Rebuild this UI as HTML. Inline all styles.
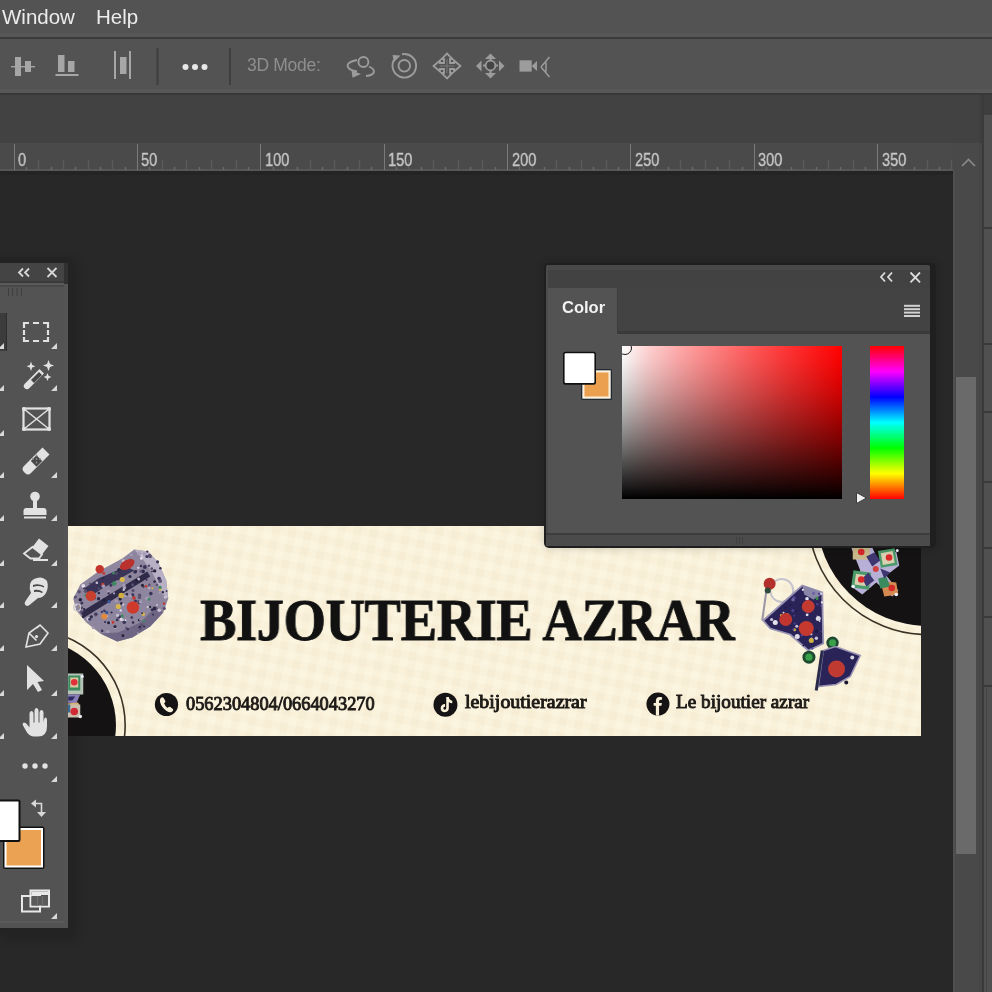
<!DOCTYPE html>
<html><head><meta charset="utf-8">
<style>
*{margin:0;padding:0;box-sizing:border-box}
html,body{width:992px;height:992px;overflow:hidden;background:#282828;font-family:"Liberation Sans",sans-serif}
.a{position:absolute}
.t{will-change:transform}
</style></head>
<body>
<!-- menu bar -->
<div class="a" style="left:0;top:0;width:992px;height:37px;background:#535353"></div>
<div class="a" style="left:0;top:33px;width:992px;height:4px;background:#575757"></div>
<div class="a" style="left:0;top:37px;width:992px;height:2px;background:#3a3a3a"></div>
<div class="a t" style="left:2px;top:3px;font-size:20.5px;color:#ececec;line-height:28px">Window</div>
<div class="a t" style="left:96px;top:3px;font-size:20.5px;color:#ececec;line-height:28px">Help</div>
<!-- options bar -->
<div class="a" style="left:0;top:39px;width:992px;height:50px;background:#535353"></div>
<div class="a" style="left:0;top:89px;width:992px;height:4px;background:#585858"></div>
<div class="a" style="left:0;top:93px;width:992px;height:2px;background:#383838"></div>
<!-- tab area -->
<div class="a" style="left:0;top:95px;width:979px;height:48px;background:#424242"></div>
<!-- ruler -->
<div class="a" style="left:0;top:143px;width:953px;height:28px;background:#4a4a4a"></div>
<!-- scroll track -->
<div class="a" style="left:0;top:171px;width:953px;height:4px;background:#242424"></div>
<div class="a" style="left:953px;top:143px;width:29px;height:849px;background:#494949"></div><div class="a" style="left:953px;top:171px;width:2px;height:821px;background:#4f4f4f"></div>
<div class="a" style="left:956px;top:377px;width:20px;height:477px;background:#6a6a6a"></div>
<div class="a" style="left:979px;top:95px;width:3px;height:48px;background:#3e3e3e"></div><div class="a" style="left:979px;top:143px;width:3px;height:849px;background:#464646"></div>
<div class="a" style="left:982px;top:95px;width:2px;height:897px;background:#3a3a3a"></div>
<div class="a" style="left:984px;top:95px;width:8px;height:897px;background:#505050"></div>
<div class="a" style="left:984px;top:95px;width:8px;height:20px;background:#3e3e3e"></div>
<div class="a" style="left:984px;top:227px;width:8px;height:2px;background:#3a3a3a"></div>
<div class="a" style="left:984px;top:343px;width:8px;height:2px;background:#3a3a3a"></div>
<div class="a" style="left:984px;top:411px;width:8px;height:2px;background:#3a3a3a"></div>
<div class="a" style="left:984px;top:481px;width:8px;height:2px;background:#3a3a3a"></div>
<div class="a" style="left:984px;top:547px;width:8px;height:2px;background:#3a3a3a"></div>
<div class="a" style="left:984px;top:616px;width:8px;height:2px;background:#3a3a3a"></div>
<div class="a" style="left:984px;top:685px;width:8px;height:2px;background:#3a3a3a"></div>
<div class="a" style="left:986px;top:687px;width:1px;height:305px;background:#454545"></div>


<style>
.rl{position:absolute;top:149px;font-size:18.5px;line-height:22px;color:#c8c8c8;transform:scaleX(0.79);transform-origin:0 0;-webkit-text-stroke:0.35px #c8c8c8}
</style>
<!-- ruler ticks -->
<svg class="a" style="left:0;top:0" width="992" height="992">
<rect x="0" y="169" width="953" height="2" fill="#575757"/>
<path d="M14.5 144V170M137.5 144V170M260.5 144V170M384.5 144V170M507.5 144V170M630.5 144V170M754.5 144V170M877.5 144V170" stroke="#7a7a7a" stroke-width="1" fill="none"/>
<path d="M38.5 160V170M63.5 160V170M88.5 160V170M112.5 160V170M162.5 160V170M186.5 160V170M211.5 160V170M236.5 160V170M285.5 160V170M310.5 160V170M334.5 160V170M359.5 160V170M408.5 160V170M433.5 160V170M458.5 160V170M482.5 160V170M532.5 160V170M556.5 160V170M581.5 160V170M606.5 160V170M655.5 160V170M680.5 160V170M705.5 160V170M729.5 160V170M779.5 160V170M803.5 160V170M828.5 160V170M853.5 160V170M902.5 160V170M927.5 160V170M951.5 160V170" stroke="#5a5a5a" stroke-width="1.5" fill="none"/>
<path d="M26.5 167V170M51.5 167V170M75.5 167V170M100.5 167V170M125.5 167V170M149.5 167V170M174.5 167V170M199.5 167V170M223.5 167V170M248.5 167V170M273.5 167V170M297.5 167V170M322.5 167V170M347.5 167V170M371.5 167V170M396.5 167V170M421.5 167V170M445.5 167V170M470.5 167V170M495.5 167V170M519.5 167V170M544.5 167V170M569.5 167V170M593.5 167V170M618.5 167V170M643.5 167V170M668.5 167V170M692.5 167V170M717.5 167V170M742.5 167V170M766.5 167V170M791.5 167V170M816.5 167V170M840.5 167V170M865.5 167V170M890.5 167V170M914.5 167V170M939.5 167V170" stroke="#6a6a6a" stroke-width="1.5" fill="none"/>
<path d="M962 166L968.5 159.5L975 166" stroke="#8a8a8a" stroke-width="1.6" fill="none"/>
</svg>
<div class="rl t" style="left:18.0px">0</div>
<div class="rl t" style="left:141.4px">50</div>
<div class="rl t" style="left:264.8px">100</div>
<div class="rl t" style="left:388.2px">150</div>
<div class="rl t" style="left:511.6px">200</div>
<div class="rl t" style="left:635.0px">250</div>
<div class="rl t" style="left:758.4px">300</div>
<div class="rl t" style="left:881.8px">350</div>

<!-- options bar icons -->
<svg class="a" style="left:0;top:0" width="992" height="100">
<g fill="#a6a6a6">
<rect x="15" y="57" width="6" height="19"/><rect x="25" y="61" width="6" height="11"/>
<rect x="11" y="66" width="4" height="1.4"/><rect x="21" y="66" width="4" height="1.4"/><rect x="31" y="66" width="4" height="1.4"/>
<rect x="58" y="55" width="6.5" height="17"/><rect x="68" y="61" width="6.5" height="11"/><rect x="55.5" y="74" width="23" height="2"/>
<rect x="114" y="51" width="2" height="28"/><rect x="120" y="57" width="6.5" height="17"/><rect x="129" y="51" width="2" height="28"/>
</g>
<rect x="156.5" y="48" width="2" height="37" fill="#3e3e3e"/>
<rect x="229" y="48" width="2" height="37" fill="#3e3e3e"/>
<g fill="#e8e8e8"><circle cx="185.5" cy="67" r="3"/><circle cx="195" cy="67" r="3"/><circle cx="204.5" cy="67" r="3"/></g>
</svg>
<div class="a t" style="left:247px;top:55px;font-size:17.5px;line-height:20px;color:#8e8e8e;letter-spacing:-0.3px">3D Mode:</div>

<!-- 3D icons -->
<svg class="a" style="left:0;top:0" width="992" height="100">
<g fill="none" stroke="#9c9c9c" stroke-width="1.9">
<circle cx="363.4" cy="62" r="5"/>
<path d="M357 71.5C347 70 342 63 357 60"/>
<path d="M369 66.5C376 69.5 376 75 366 76"/>
<path d="M395 58.5A11.8 11.8 0 1 0 402 54.2" />
<circle cx="404.3" cy="65.8" r="5.8"/>
<path stroke-width="1.8" d="M447 53.5L452.5 59H450V63H454V60.5L460.5 66L454 71.5V69H450V73H452.5L447 78.5L441.5 73H444V69H440V71.5L433.5 66L440 60.5V63H444V59H441.5Z"/>
<path stroke-width="1" stroke="#7a7a7a" d="M447 59V73M440 66H454"/>
<path stroke-width="2.2" d="M490.5 58V73M483 65.5H498"/><circle cx="490.5" cy="65.5" r="4.8" stroke-width="1.8" fill="#454545"/>
<path stroke-width="1.5" d="M541 67L549.5 57M541 67L549.5 77M546 62.5V71.5"/>
</g>
<g fill="#9c9c9c">
<path d="M392.5 55L400.5 55.5L394 62Z"/>
<path d="M351.5 70.5L361 74L352.5 77.8Z"/>
<path d="M490.5 53.5L496 59H485Z"/><path d="M490.5 78.5L496 73H485Z"/>
<path d="M476 66L481.5 60.5V71.5Z"/><path d="M504.5 66L499 60.5V71.5Z"/>
<rect x="519.5" y="60.3" width="12.2" height="11.3"/>
<path d="M531.7 66L537 61V71Z"/>
</g>
</svg>


<!-- banner -->
<div class="a" style="left:0;top:257px;width:72px;height:678px;background:#232323;box-shadow:4px 4px 10px rgba(0,0,0,0.18)"></div>

<div class="a" id="banner" style="left:14px;top:525.5px;width:906.5px;height:210px;background:#f9f1da;overflow:hidden">
<svg class="a" style="left:0;top:0" width="907" height="210" viewBox="14 525.5 906.5 210">
<defs>
<pattern id="tex" width="16" height="16" patternUnits="userSpaceOnUse" patternTransform="rotate(12)">
<rect width="16" height="16" fill="#f9f1da"/>
<rect x="0" y="0" width="8" height="8" fill="#fbf4df"/>
<rect x="8" y="8" width="8" height="8" fill="#f6edd4"/>
</pattern>
</defs>
<rect x="14" y="525.5" width="906.5" height="210" fill="url(#tex)"/>
<circle cx="29.4" cy="724.7" r="95.5" fill="none" stroke="#3b3124" stroke-width="1.6"/>
<circle cx="29.4" cy="724.7" r="86.3" fill="#141212"/>
<circle cx="927.7" cy="514.1" r="120" fill="none" stroke="#3b3124" stroke-width="1.6"/>
<circle cx="927.7" cy="514.1" r="111.4" fill="#141212"/>


<!-- bracelet -->
<g>
<path fill="#8e869e" d="M73 598L80 584L98 571L122 558L134 549L148 551L158 562L166 580L168 598L163 612L150 626L132 637L117 641L100 633L86 622L76 610Z"/>
<path fill="#b8b0c4" d="M134 549L148 551L158 562L166 580L168 598L162 592L152 572L142 558Z"/>
<path fill="#6e6684" d="M100 633L117 641L132 637L150 626L163 612L156 606L140 622L118 632Z"/>
<path fill="#2e2a48" d="M80 612L84 617L150 576L147 571Z"/>
<path fill="#3a3558" d="M84 588L98 578L126 566L134 570L102 588L90 596Z"/>
<circle cx="116.0" cy="600.5" r="1.4" fill="#a69cb8"/><circle cx="121.2" cy="603.0" r="1.4" fill="#2c2848"/><circle cx="132.8" cy="622.0" r="1.2" fill="#2c2848"/><circle cx="138.9" cy="552.9" r="1.9" fill="#a69cb8"/><circle cx="135.1" cy="605.6" r="0.9" fill="#2c2848"/><circle cx="114.9" cy="626.5" r="1.5" fill="#e4deea"/><circle cx="120.5" cy="609.9" r="1.2" fill="#e4deea"/><circle cx="152.8" cy="614.1" r="1.1" fill="#3a3458"/><circle cx="145.8" cy="585.8" r="1.3" fill="#c23a30"/><circle cx="159.5" cy="592.2" r="1.3" fill="#a69cb8"/><circle cx="79.9" cy="606.9" r="1.2" fill="#d8b64a"/><circle cx="148.7" cy="565.3" r="1.3" fill="#5a5070"/><circle cx="91.1" cy="616.3" r="1.5" fill="#2c2848"/><circle cx="84.1" cy="587.7" r="1.2" fill="#3a3458"/><circle cx="101.9" cy="630.4" r="1.3" fill="#3a3458"/><circle cx="154.2" cy="608.0" r="1.9" fill="#2c2848"/><circle cx="146.4" cy="579.3" r="1.0" fill="#3a3458"/><circle cx="81.6" cy="602.6" r="1.5" fill="#3a3458"/><circle cx="108.3" cy="590.7" r="1.4" fill="#a69cb8"/><circle cx="127.6" cy="628.7" r="1.1" fill="#2c2848"/><circle cx="156.8" cy="604.5" r="1.0" fill="#c9c2d4"/><circle cx="95.6" cy="613.8" r="1.7" fill="#3a3458"/><circle cx="129.7" cy="576.0" r="1.6" fill="#2c2848"/><circle cx="126.1" cy="627.4" r="1.2" fill="#5a5070"/><circle cx="160.1" cy="567.8" r="1.2" fill="#2c2848"/><circle cx="89.7" cy="582.9" r="1.0" fill="#5a5070"/><circle cx="107.4" cy="631.0" r="1.6" fill="#a69cb8"/><circle cx="138.7" cy="602.8" r="0.9" fill="#2c2848"/><circle cx="118.8" cy="616.2" r="1.9" fill="#3a3458"/><circle cx="80.1" cy="599.2" r="1.8" fill="#24223a"/><circle cx="143.0" cy="613.7" r="1.8" fill="#d8b64a"/><circle cx="106.4" cy="612.0" r="1.8" fill="#3a5a9a"/><circle cx="112.6" cy="621.7" r="1.5" fill="#c23a30"/><circle cx="132.4" cy="584.2" r="1.5" fill="#5a5070"/><circle cx="80.6" cy="607.8" r="1.8" fill="#a69cb8"/><circle cx="142.2" cy="584.7" r="1.5" fill="#24223a"/><circle cx="114.8" cy="626.1" r="1.7" fill="#2c2848"/><circle cx="75.8" cy="604.3" r="1.1" fill="#e4deea"/><circle cx="139.3" cy="594.7" r="1.8" fill="#5a5070"/><circle cx="101.6" cy="611.4" r="1.1" fill="#3a3458"/><circle cx="159.0" cy="609.7" r="1.8" fill="#c9c2d4"/><circle cx="104.1" cy="610.3" r="1.3" fill="#3a3458"/><circle cx="156.6" cy="584.4" r="1.2" fill="#5a5070"/><circle cx="85.9" cy="594.7" r="1.7" fill="#3f8a62"/><circle cx="115.8" cy="574.3" r="1.3" fill="#3a3458"/><circle cx="132.4" cy="594.4" r="1.7" fill="#3a3458"/><circle cx="166.3" cy="590.6" r="0.9" fill="#2c2848"/><circle cx="140.3" cy="601.5" r="1.7" fill="#3a3458"/><circle cx="151.8" cy="570.8" r="0.9" fill="#2c2848"/><circle cx="132.8" cy="590.1" r="1.6" fill="#5a5070"/><circle cx="138.0" cy="567.3" r="1.1" fill="#e4deea"/><circle cx="140.8" cy="565.5" r="1.2" fill="#3a3458"/><circle cx="139.2" cy="596.9" r="1.7" fill="#5a5070"/><circle cx="110.4" cy="621.9" r="1.0" fill="#a69cb8"/><circle cx="85.3" cy="590.7" r="1.8" fill="#5a5070"/><circle cx="108.8" cy="601.3" r="1.7" fill="#3a5a9a"/><circle cx="162.7" cy="591.7" r="1.1" fill="#24223a"/><circle cx="141.6" cy="624.3" r="1.6" fill="#5a5070"/><circle cx="124.0" cy="621.8" r="1.8" fill="#3a3458"/><circle cx="154.3" cy="581.1" r="1.3" fill="#2c2848"/><circle cx="125.3" cy="619.7" r="0.9" fill="#e4deea"/><circle cx="149.9" cy="554.9" r="1.1" fill="#d8b64a"/><circle cx="104.8" cy="621.5" r="1.0" fill="#2c2848"/><circle cx="122.1" cy="615.6" r="1.6" fill="#3f8a62"/><circle cx="162.8" cy="594.3" r="1.0" fill="#a69cb8"/><circle cx="94.0" cy="597.5" r="1.6" fill="#3a3458"/><circle cx="133.7" cy="597.1" r="1.5" fill="#c23a30"/><circle cx="102.6" cy="584.1" r="1.8" fill="#c23a30"/><circle cx="92.8" cy="627.3" r="1.4" fill="#a69cb8"/><circle cx="127.4" cy="567.5" r="1.4" fill="#5a5070"/><circle cx="165.1" cy="596.5" r="1.7" fill="#c9c2d4"/><circle cx="126.5" cy="594.2" r="1.0" fill="#24223a"/><circle cx="124.2" cy="587.1" r="1.8" fill="#a69cb8"/><circle cx="98.6" cy="592.5" r="1.3" fill="#2c2848"/><circle cx="118.3" cy="578.2" r="1.5" fill="#3a3458"/><circle cx="147.0" cy="551.1" r="1.1" fill="#3a3458"/><circle cx="138.3" cy="578.6" r="1.5" fill="#c9c2d4"/><circle cx="83.0" cy="616.2" r="1.4" fill="#2c2848"/><circle cx="123.4" cy="589.2" r="1.3" fill="#c9c2d4"/><circle cx="123.3" cy="563.7" r="1.5" fill="#3a3458"/><circle cx="133.7" cy="597.7" r="1.5" fill="#c23a30"/><circle cx="154.4" cy="570.4" r="1.7" fill="#24223a"/><circle cx="158.8" cy="578.1" r="1.8" fill="#3a3458"/><circle cx="157.3" cy="561.3" r="1.6" fill="#3a3458"/><circle cx="152.1" cy="587.8" r="1.0" fill="#d8b64a"/><circle cx="111.3" cy="612.0" r="1.1" fill="#2c2848"/><circle cx="137.8" cy="632.8" r="1.0" fill="#a69cb8"/><circle cx="121.0" cy="618.8" r="1.6" fill="#e4deea"/><circle cx="125.4" cy="596.4" r="1.0" fill="#5a5070"/><circle cx="116.9" cy="619.4" r="1.4" fill="#3a3458"/><circle cx="122.0" cy="588.6" r="0.9" fill="#5a5070"/><circle cx="139.6" cy="626.7" r="1.4" fill="#2c2848"/><circle cx="143.2" cy="586.3" r="1.1" fill="#3a3458"/><circle cx="139.9" cy="628.2" r="1.3" fill="#5a5070"/><circle cx="130.0" cy="595.4" r="1.7" fill="#a69cb8"/><circle cx="143.7" cy="620.6" r="1.3" fill="#3f8a62"/><circle cx="139.0" cy="619.6" r="1.3" fill="#24223a"/><circle cx="141.7" cy="555.5" r="1.4" fill="#c9c2d4"/><circle cx="133.7" cy="606.4" r="1.8" fill="#3a3458"/><circle cx="136.3" cy="580.1" r="1.5" fill="#24223a"/><circle cx="123.6" cy="584.8" r="1.5" fill="#a69cb8"/><circle cx="139.6" cy="619.1" r="0.9" fill="#a69cb8"/><circle cx="131.5" cy="617.0" r="1.3" fill="#3a3458"/><circle cx="125.3" cy="595.7" r="1.5" fill="#a69cb8"/><circle cx="149.9" cy="556.0" r="1.7" fill="#5a5070"/><circle cx="88.2" cy="592.4" r="1.4" fill="#2c2848"/><circle cx="131.1" cy="554.4" r="1.3" fill="#a69cb8"/><circle cx="123.0" cy="604.0" r="1.2" fill="#c9c2d4"/><circle cx="135.2" cy="600.6" r="1.6" fill="#3a3458"/><circle cx="87.9" cy="618.4" r="1.8" fill="#c9c2d4"/><circle cx="144.1" cy="553.6" r="1.8" fill="#a69cb8"/><circle cx="113.8" cy="592.9" r="1.1" fill="#a69cb8"/><circle cx="122.7" cy="635.2" r="1.4" fill="#24223a"/><circle cx="130.3" cy="559.6" r="1.4" fill="#5a5070"/><circle cx="123.2" cy="560.4" r="1.6" fill="#c9c2d4"/><circle cx="116.3" cy="573.1" r="1.3" fill="#5a5070"/><circle cx="146.9" cy="597.8" r="1.9" fill="#a69cb8"/><circle cx="142.8" cy="570.9" r="1.8" fill="#2c2848"/><circle cx="147.5" cy="606.5" r="1.2" fill="#c9c2d4"/><circle cx="138.1" cy="601.0" r="1.5" fill="#5a5070"/><circle cx="144.6" cy="566.5" r="1.9" fill="#3a3458"/><circle cx="98.7" cy="588.1" r="1.0" fill="#5a5070"/><circle cx="81.2" cy="611.2" r="1.5" fill="#5a5070"/><circle cx="108.5" cy="593.0" r="1.2" fill="#3a3458"/><circle cx="143.8" cy="626.1" r="1.0" fill="#2c2848"/><circle cx="149.9" cy="606.4" r="1.1" fill="#24223a"/><circle cx="113.3" cy="572.7" r="1.3" fill="#3f8a62"/><circle cx="103.9" cy="599.5" r="1.8" fill="#24223a"/><circle cx="113.6" cy="583.0" r="1.8" fill="#2c2848"/><circle cx="126.6" cy="593.6" r="1.2" fill="#24223a"/><circle cx="146.7" cy="556.0" r="1.6" fill="#3a3458"/><circle cx="141.9" cy="612.8" r="1.0" fill="#3a3458"/><circle cx="107.0" cy="615.8" r="1.0" fill="#c9c2d4"/><circle cx="140.4" cy="601.4" r="1.8" fill="#a69cb8"/><circle cx="159.8" cy="589.3" r="1.2" fill="#d8b64a"/><circle cx="103.2" cy="585.8" r="1.8" fill="#a69cb8"/><circle cx="96.6" cy="582.3" r="1.3" fill="#c9c2d4"/><circle cx="110.6" cy="584.7" r="1.5" fill="#3a3458"/><circle cx="148.7" cy="598.7" r="1.5" fill="#3f8a62"/><circle cx="89.8" cy="618.8" r="1.2" fill="#3a5a9a"/><circle cx="75.1" cy="596.4" r="1.5" fill="#5a5070"/><circle cx="149.4" cy="554.9" r="1.7" fill="#5a5070"/><circle cx="81.0" cy="607.3" r="1.6" fill="#2c2848"/><circle cx="134.7" cy="571.6" r="1.7" fill="#3a3458"/><circle cx="122.5" cy="619.4" r="1.2" fill="#c9c2d4"/><circle cx="119.9" cy="598.4" r="1.6" fill="#24223a"/><circle cx="159.9" cy="586.8" r="1.6" fill="#3f8a62"/><circle cx="164.0" cy="607.9" r="1.6" fill="#5a5070"/><circle cx="149.2" cy="587.8" r="1.0" fill="#c9c2d4"/><circle cx="92.4" cy="588.1" r="1.9" fill="#3a3458"/><circle cx="83.9" cy="608.6" r="1.1" fill="#24223a"/><circle cx="78.9" cy="591.2" r="1.8" fill="#5a5070"/><circle cx="95.4" cy="615.0" r="1.1" fill="#5a5070"/><circle cx="89.4" cy="618.7" r="1.4" fill="#3a3458"/><circle cx="150.6" cy="593.1" r="1.8" fill="#3a3458"/><circle cx="159.9" cy="580.5" r="1.9" fill="#5a5070"/><circle cx="118.8" cy="569.3" r="1.8" fill="#2c2848"/><circle cx="149.1" cy="584.4" r="1.4" fill="#5a5070"/><circle cx="135.5" cy="570.9" r="1.4" fill="#2c2848"/><circle cx="108.3" cy="622.3" r="1.5" fill="#24223a"/><circle cx="103.6" cy="572.9" r="1.4" fill="#c23a30"/><circle cx="98.3" cy="598.2" r="1.7" fill="#2c2848"/><circle cx="141.1" cy="557.9" r="1.4" fill="#e4deea"/><circle cx="163.8" cy="603.0" r="1.2" fill="#c23a30"/><circle cx="148.0" cy="587.4" r="1.0" fill="#a69cb8"/><circle cx="151.5" cy="568.2" r="1.4" fill="#5a5070"/><circle cx="102.6" cy="577.6" r="1.2" fill="#2c2848"/><circle cx="117.4" cy="614.8" r="1.6" fill="#c9c2d4"/><circle cx="83.0" cy="585.3" r="1.9" fill="#e4deea"/><circle cx="151.8" cy="609.2" r="1.3" fill="#2c2848"/><circle cx="140.5" cy="570.8" r="1.4" fill="#5a5070"/>
<circle cx="99.5" cy="568.8" r="4.2" fill="#c3342c"/>
<ellipse cx="127" cy="564" rx="8" ry="4.5" transform="rotate(-30 127 564)" fill="#b9302c"/>
<circle cx="90.6" cy="595.4" r="5.2" fill="#c9402f"/>
<circle cx="132.7" cy="607" r="6.2" fill="#d03a2c"/>
<circle cx="122" cy="579" r="2.6" fill="#d9b84a"/><circle cx="121" cy="595" r="2.8" fill="#d2ae3c"/><circle cx="118" cy="606" r="2.5" fill="#d9b84a"/><circle cx="114" cy="583" r="2.3" fill="#3f8a62"/>
<circle cx="104" cy="616" r="3" fill="#e08a40"/>
<circle cx="77" cy="607" r="3.5" fill="none" stroke="#c8c4cc" stroke-width="1.2"/>
</g>
<!-- pendant -->
<g>
<circle cx="781.5" cy="590" r="11.5" fill="none" stroke="#c5c3cc" stroke-width="2"/>
<path d="M767 584L762 620" stroke="#9a96a6" stroke-width="2"/>
<path fill="#2a2358" stroke="#9a94b4" stroke-width="1.8" d="M763 620L802 585L822 592L823 643L808 650L790 634L770 628Z"/>
<path fill="#8a86a8" d="M802 585L822 592L815 600L804 594Z"/><circle cx="771.4" cy="619.0" r="1.6" fill="#c9c4dc"/><circle cx="811.3" cy="638.7" r="1.7" fill="#c9c4dc"/><circle cx="804.0" cy="630.1" r="0.8" fill="#1e1a48"/><circle cx="796.5" cy="625.8" r="1.5" fill="#c9c4dc"/><circle cx="810.9" cy="633.6" r="1.3" fill="#c9c4dc"/><circle cx="802.6" cy="589.3" r="1.1" fill="#e8e4f0"/><circle cx="806.8" cy="598.3" r="1.8" fill="#e8e4f0"/><circle cx="792.6" cy="609.9" r="1.5" fill="#4a4490"/><circle cx="809.0" cy="625.1" r="0.9" fill="#c9c4dc"/><circle cx="807.6" cy="604.8" r="0.8" fill="#c9c4dc"/><circle cx="803.3" cy="630.0" r="1.1" fill="#e8e4f0"/><circle cx="794.0" cy="615.2" r="0.9" fill="#4a4490"/><circle cx="816.6" cy="598.0" r="1.7" fill="#3a8a50"/><circle cx="812.2" cy="647.9" r="1.1" fill="#4a4490"/><circle cx="775.6" cy="622.8" r="1.3" fill="#1e1a48"/><circle cx="820.2" cy="593.6" r="1.3" fill="#6a62a0"/><circle cx="816.2" cy="630.7" r="1.7" fill="#1e1a48"/><circle cx="790.0" cy="604.6" r="1.1" fill="#1e1a48"/><circle cx="813.3" cy="592.8" r="1.5" fill="#6a62a0"/><circle cx="817.1" cy="603.8" r="1.2" fill="#4a4490"/><circle cx="784.6" cy="612.8" r="0.8" fill="#1e1a48"/><circle cx="793.7" cy="597.3" r="1.8" fill="#4a4490"/><circle cx="816.1" cy="637.8" r="1.7" fill="#c9c4dc"/><circle cx="819.4" cy="620.7" r="0.8" fill="#e8e4f0"/><circle cx="806.9" cy="614.3" r="1.4" fill="#e8e4f0"/><circle cx="818.6" cy="593.3" r="1.1" fill="#4a4490"/><circle cx="821.6" cy="601.9" r="1.1" fill="#e8e4f0"/><circle cx="796.4" cy="610.6" r="1.0" fill="#1e1a48"/><circle cx="792.8" cy="599.3" r="1.8" fill="#6a62a0"/><circle cx="808.0" cy="611.8" r="1.3" fill="#4a4490"/><circle cx="785.6" cy="607.0" r="1.1" fill="#1e1a48"/><circle cx="821.1" cy="593.2" r="1.4" fill="#c9c4dc"/><circle cx="814.8" cy="599.0" r="1.0" fill="#1e1a48"/><circle cx="787.0" cy="614.0" r="1.6" fill="#d0b040"/><circle cx="816.7" cy="615.8" r="0.8" fill="#c9c4dc"/><circle cx="812.5" cy="640.6" r="1.0" fill="#3a8a50"/><circle cx="794.3" cy="629.3" r="1.5" fill="#d0b040"/><circle cx="801.8" cy="634.7" r="1.4" fill="#4a4490"/><circle cx="801.7" cy="604.7" r="1.1" fill="#1e1a48"/><circle cx="801.2" cy="630.4" r="0.9" fill="#1e1a48"/><circle cx="794.5" cy="622.9" r="1.0" fill="#4a4490"/><circle cx="781.1" cy="614.9" r="1.4" fill="#d0b040"/><circle cx="816.0" cy="615.9" r="1.0" fill="#1e1a48"/><circle cx="820.6" cy="630.8" r="0.8" fill="#4a4490"/><circle cx="792.9" cy="628.8" r="1.1" fill="#4a4490"/><circle cx="803.0" cy="645.1" r="0.8" fill="#1e1a48"/><circle cx="783.3" cy="612.3" r="1.0" fill="#e8e4f0"/><circle cx="810.8" cy="633.0" r="1.0" fill="#c9c4dc"/><circle cx="821.2" cy="605.3" r="1.0" fill="#6a62a0"/>
<circle cx="808" cy="606" r="6.5" fill="#c33a30"/>
<circle cx="785.5" cy="619" r="6.5" fill="#c03530"/>
<circle cx="806" cy="628" r="7.5" fill="#c6392f"/>
<circle cx="775" cy="622" r="2.5" fill="#e6e2ea"/><circle cx="797" cy="636" r="2.5" fill="#dedae6"/><circle cx="818" cy="618" r="2.5" fill="#dcd8e4"/><circle cx="811" cy="640" r="2.5" fill="#d0b040"/>
<circle cx="769.4" cy="583.3" r="6" fill="#b3302c"/>
<circle cx="767.5" cy="590" r="3" fill="#2e4a3a"/>
<circle cx="832.3" cy="642.3" r="6.2" fill="#1f4a30"/><circle cx="832.3" cy="642.3" r="3.5" fill="#3aa04a"/>
<circle cx="808.7" cy="656.7" r="6.5" fill="#1f4a30"/><circle cx="808.7" cy="656.7" r="3.6" fill="#38a048"/>
<path fill="#2a2358" stroke="#9a94b4" stroke-width="1.6" d="M818 686L823 650L835 646L860 655L850 676L836 684Z"/>
<circle cx="836.3" cy="668.5" r="8.5" fill="#c03a32"/>
<path d="M822 650L816 690" stroke="#2a2a4a" stroke-width="3"/>
<circle cx="852" cy="657" r="2" fill="#d8d4e0"/><circle cx="846" cy="682" r="2" fill="#1a1830"/>
</g>
<!-- TR cross jewel -->
<g>
<path fill="#b8b0d6" d="M851 547L872 547L878 560L896 551L899 565L886 575L898 590L892 596L876 582L862 594L851 586L860 570Z"/>
<rect x="852.5" y="543" width="17" height="16" fill="#c9b98a"/>
<rect x="879" y="549" width="17" height="17" transform="rotate(-10 887.5 557.5)" fill="#4a9a6a"/>
<rect x="881.5" y="551.5" width="12" height="12" transform="rotate(-10 887.5 557.5)" fill="#d8d0b0"/>
<rect x="852" y="571" width="18" height="17" transform="rotate(8 861 579)" fill="#4a9a6a"/>
<rect x="855" y="574" width="12" height="11" transform="rotate(8 861 579)" fill="#d8d0b0"/>
<path fill="#d48a50" d="M880 580L896 582L898 594L884 596Z"/>
<path fill="#3a8a60" d="M878 578L886 576L890 586L880 588Z"/>
<path fill="#3e3670" d="M866 556L874 552L880 560L872 566Z M868 572L874 580L866 586L862 578Z M880 568L890 572L884 578Z"/>
<circle cx="861" cy="551.5" r="3.3" fill="#d8282a"/><circle cx="888.8" cy="557" r="3.3" fill="#d8282a"/><circle cx="861" cy="579" r="3.3" fill="#d8282a"/><circle cx="891.5" cy="587.5" r="3.3" fill="#d42a28"/><circle cx="875.5" cy="568.5" r="3" fill="#d04040"/>
<circle cx="853" cy="586" r="1.8" fill="#eef"/><circle cx="896" cy="594" r="1.8" fill="#eef"/><circle cx="897" cy="550" r="1.5" fill="#eef"/>
</g>
<!-- BL piece -->
<g>
<rect x="66" y="673" width="17" height="21" fill="#b6c4b8"/>
<rect x="68" y="675" width="12" height="15" fill="#3d8a5f"/>
<rect x="70" y="677" width="8" height="10" fill="#d6c8a0"/>
<circle cx="74" cy="681.8" r="3.3" fill="#e0303a"/>
<path fill="#8a7eb8" d="M66 694L80 694L76 703L66 702Z"/>
<path fill="#2e2a60" d="M68 696L75 696L72 700L68 700Z"/>
<path fill="#d8b070" d="M66 703L78 702L80 707L66 708Z"/>
<rect x="66" y="704" width="14" height="13" fill="#c9c0b0"/>
<path fill="#3a6a90" d="M66 704L70 704L70 712L66 712Z"/>
<circle cx="74" cy="711" r="3.8" fill="#d02a34"/>
<circle cx="80" cy="716" r="1.8" fill="#efe8f4"/><circle cx="82" cy="676" r="1.5" fill="#eef"/>
</g>
<g>
<circle cx="166.2" cy="704" r="11.6" fill="#151313"/>
<path fill="#f9f1da" d="M160.5 697.5Q162 696.3 163.2 697.2L165 700.2Q165.5 701.3 164.5 702.2L163.8 702.8Q164.6 705.2 167.2 707.4L168 706.8Q169 706 170 706.6L172.6 708.4Q173.4 709.4 172.5 710.6L171.4 711.4Q169.6 712.6 166.3 710.5Q161.2 707 159.8 701.6Q159.2 698.8 160.5 697.5Z"/>
<circle cx="445.2" cy="704.2" r="12" fill="#151313"/>
<path fill="#f9f1da" d="M446 696.5H448.6Q449 699.6 452 700.2V702.8Q449.8 702.8 448.6 701.6V707.6Q448.6 711.6 444.6 711.8Q440.6 711.8 440.4 707.8Q440.6 703.8 444.8 703.6V706.2Q443 706.2 443 707.8Q443.2 709.2 444.6 709.2Q446 709.2 446 707.4Z"/>
<circle cx="657.7" cy="703.6" r="11.5" fill="#151313"/>
<path fill="#f9f1da" d="M655.6 715V705.2H653.4V702.6H655.6V700.4Q655.8 696.4 659.6 696.6L661.8 696.8V699.2H660.4Q658.8 699.2 658.8 700.8V702.6H661.6L661.2 705.2H658.8V715Z"/>
</g>
</svg>
<div class="a t" id="title" style="left:186px;top:59.5px;font-family:'Liberation Serif',serif;font-weight:bold;font-size:60px;line-height:70px;color:#111;white-space:nowrap;transform-origin:0 0;transform:scaleX(0.91);-webkit-text-stroke:0.9px #111;letter-spacing:-0.5px">BIJOUTERIE AZRAR</div>
<div class="a t" id="phone" style="left:172px;top:166.5px;transform:scaleX(1.02);font-family:'Liberation Serif',serif;font-weight:normal;-webkit-text-stroke:0.9px #1d1a17;font-size:18px;line-height:24px;color:#1d1a17;white-space:nowrap;transform-origin:0 0">0562304804/0664043270</div>
<div class="a t" id="tiktok" style="transform:scaleX(1.106);left:451px;top:164px;font-family:'Liberation Serif',serif;font-weight:normal;-webkit-text-stroke:0.9px #1d1a17;font-size:18px;line-height:24px;color:#1d1a17;white-space:nowrap;transform-origin:0 0">lebijoutierazrar</div>
<div class="a t" id="fb" style="left:662px;top:164px;transform:scaleX(1.066);font-family:'Liberation Serif',serif;font-weight:normal;-webkit-text-stroke:0.9px #1d1a17;font-size:18px;line-height:24px;color:#1d1a17;white-space:nowrap;transform-origin:0 0">Le bijoutier azrar</div>
</div>
<!-- tools panel -->
<div class="a" style="left:0;top:263px;width:68px;height:665px;background:#535353"></div>
<div class="a" style="left:64px;top:284px;width:3.5px;height:637px;background:#555555"></div>
<div class="a" style="left:64px;top:263px;width:4px;height:21px;background:#303030"></div>
<div class="a" style="left:0;top:263px;width:64px;height:17.5px;background:#444444"></div>
<div class="a" style="left:0;top:280.5px;width:64px;height:2px;background:#3a3a3a"></div>
<div class="a" style="left:0;top:282.5px;width:64px;height:2.5px;background:#5a5a5a"></div>
<div class="a" style="left:0;top:285px;width:64px;height:1.5px;background:#484848"></div>
<div class="a" style="left:0;top:921px;width:64px;height:2px;background:#5a5a5a"></div>
<div class="a" style="left:0;top:313px;width:7px;height:38px;background:#3c3c3c;border-right:1px solid #2e2e2e"></div>
<svg class="a" style="left:0;top:0" width="80" height="992">
<g fill="#3f3f3f"><rect x="8" y="288" width="1" height="8"/><rect x="12" y="288" width="1" height="8"/><rect x="16.5" y="288" width="1" height="8"/><rect x="21" y="288" width="1" height="8"/></g>
<g fill="none" stroke="#d6d6d6" stroke-width="1.8">
<path d="M23 268.5L19 272.5L23 276.5M29 268.5L25 272.5L29 276.5"/>
<path d="M47.5 268L56.5 277M56.5 268L47.5 277"/>
</g>
<g fill="none" stroke="#e2e2e2" stroke-width="2.2" stroke-linecap="butt">
<path d="M24 328V323H29M33 323H39M43 323H48V328M48 330V335M48 337V341H43M39 341H33M29 341H24V337M24 335V330"/>
<rect x="23.5" y="408.5" width="26" height="21"/>
<path stroke-width="1.6" d="M24 409L49 429M49 409L24 429"/>
<path stroke-width="1.6" d="M26 647L29 633L40 625L48 633L40 644Z M40 625L37 628M29 633L36.5 640.5"/>
</g>
<g fill="#e2e2e2">
<circle cx="24" cy="409" r="2"/><circle cx="49" cy="409" r="2"/><circle cx="24" cy="429" r="2"/><circle cx="49" cy="429" r="2"/>
<path d="M25 383.5L39.5 369L44 373.5L29.5 388Q27 390.5 24.5 388Q22.5 386 25 383.5Z"/>
<path d="M31 361.5L32.2 365L35.5 366.2L32.2 367.4L31 371L29.8 367.4L26.5 366.2L29.8 365Z"/>
<path d="M48.5 360L50 364L54 365.5L50 367L48.5 371L47 367L43 365.5L47 364Z"/>
<path d="M47.5 373L48.6 375.8L51.4 377L48.6 378.2L47.5 381L46.4 378.2L43.6 377L46.4 375.8Z"/>
<path d="M42.5 447.5L49.5 454.5L31 473Q28 476 25 473L24 472Q21 469 24 466Z"/>
<circle cx="35" cy="496.5" r="4.8"/><rect x="33" y="500" width="4" height="8"/>
<path d="M23.5 515V511Q23.5 508 26.5 508H43.5Q46.5 508 46.5 511V515Z"/><rect x="24" y="516.5" width="22" height="2"/>
<path d="M39 538.5L48.5 546L42 554.5L32.5 547Z"/>
<path d="M33 559H48V561H33Z"/>
<path d="M27 665V690L33 684L38 692L42 690L37.5 682L44 681Z"/>
<path transform="translate(0 1.5)" d="M29.5 712Q29.5 709.5 31.5 709.5Q33.5 709.5 33.5 712V721H34.5V709Q34.5 706.5 36.5 706.5Q38.5 706.5 38.5 709V721H39.5V711Q39.5 708.5 41.5 708.5Q43.5 708.5 43.5 711V721.5Q44 716 45.5 716Q47 716 47 718.5V725Q47 735 38 735H34Q30 735 27 731L23 724Q22 721.5 24 721Q26 721 28 724L29.5 726Z"/>
<path d="M34 579Q42 575 47 581Q49 587 46 593Q43 598 38 598L29.5 605Q26.5 607 25 604.5Q24 603 25.5 601L31 593Q29 589 30 584Q31 580.5 34 579Z"/>
<circle cx="25" cy="766" r="2.7"/><circle cx="35" cy="766" r="2.7"/><circle cx="45" cy="766" r="2.7"/>
</g>
<g fill="#474747">
<path d="M39 372L42 375L34 383L31 380Z"/>
<path d="M33 585Q38 583 44 586L44 587.5Q38 585 33 587Z"/><path d="M34 590Q39 589 43 592L42 593Q38 591 34 592Z"/>
<rect x="-4" y="-4" width="8" height="8" transform="translate(36.5 461) rotate(45)"/>
</g>
<g fill="#8a8a8a"><circle cx="33" cy="459" r="0.9"/><circle cx="36.5" cy="455.5" r="0.9"/><circle cx="36.5" cy="462.5" r="0.9"/><circle cx="40" cy="459" r="0.9"/><circle cx="36.5" cy="459" r="0.9"/></g>
<path d="M32.5 547L42 554.5L39 558.5H30.5L24 553.5Z" fill="none" stroke="#e2e2e2" stroke-width="1.8"/>
<circle cx="36.5" cy="636.5" r="1.6" fill="#e2e2e2"/>
<g fill="#d8d8d8">
<path d="M57 343V349H51Z"/><path d="M57 385V391H51Z"/><path d="M57 472V478H51Z"/><path d="M57 515V521H51Z"/>
<path d="M57 560V566H51Z"/><path d="M57 602V608H51Z"/><path d="M57 645V651H51Z"/><path d="M57 690V696H51Z"/>
<path d="M57 733V739H51Z"/><path d="M57 776V782H51Z"/><path d="M57 913V919H51Z"/>
<path d="M4 343V349H-2Z"/><path d="M4 385V391H-2Z"/><path d="M4 430V436H-2Z"/><path d="M4 472V478H-2Z"/><path d="M4 515V521H-2Z"/>
<path d="M4 560V566H-2Z"/><path d="M4 602V608H-2Z"/><path d="M4 645V651H-2Z"/><path d="M4 690V696H-2Z"/><path d="M4 733V739H-2Z"/>
</g>
<!-- swatches -->
<rect x="3" y="826.5" width="41.5" height="42.5" rx="2" fill="#111"/>
<rect x="4.5" y="828" width="38.5" height="39.5" fill="#fff"/>
<rect x="6.5" y="830" width="34.5" height="35.5" fill="#eca253"/>
<rect x="-5" y="799.5" width="25.5" height="42.5" rx="2" fill="#111"/>
<rect x="-5" y="801.5" width="23.5" height="38.5" fill="#ffffff"/>
<g fill="none" stroke="#d8d8d8" stroke-width="1.6"><path d="M35 803.5H41.5V813"/></g>
<g fill="#d8d8d8"><path d="M31 803.5L36 799.5V807.5Z"/><path d="M37 812H46L41.5 817Z"/></g>
<g fill="none" stroke="#e8e8e8" stroke-width="2">
<rect x="22" y="896" width="18" height="15.5"/>
<rect x="30.5" y="890.5" width="18.5" height="16"/>
</g>
<rect x="31.5" y="891.5" width="16.5" height="3.5" fill="#e8e8e8"/>
<rect x="31.5" y="896" width="16.5" height="9.5" fill="#5a5a5a"/>
<g fill="#6e6e6e"><rect x="37" y="896" width="1" height="9.5"/><rect x="42" y="896" width="1" height="9.5"/></g>
</svg>

<!-- color panel -->
<div class="a" style="left:544px;top:263px;width:392px;height:285px;background:#1f1f1f;border-radius:5px;box-shadow:0 0 8px rgba(0,0,0,0.2)"></div>
<div class="a" style="left:546px;top:265px;width:384px;height:281px;background:#535353;border-radius:3px 3px 0 0;overflow:hidden">
  <div class="a" style="left:0;top:0;width:384px;height:23px;background:#424242"></div>
  <div class="a" style="left:0;top:0;width:384px;height:5px;background:#494949"></div><div class="a" style="left:0;top:0;width:2px;height:268px;background:#4c4c4c"></div>
  <div class="a" style="left:72px;top:23px;width:312px;height:44px;background:#434343"></div>
  <div class="a" style="left:72px;top:66px;width:312px;height:3px;background:#3a3a3a"></div>
  <div class="a" style="left:71px;top:23px;width:1px;height:46px;background:#3c3c3c"></div>
  <div class="a" style="left:0;top:268px;width:384px;height:2px;background:#3d3d3d"></div>
  <div class="a" style="left:0;top:270px;width:384px;height:11px;background:#4b4b4b"></div>
</div>
<div class="a t" style="left:562px;top:297px;font-size:16.5px;font-weight:bold;color:#f2f2f2;line-height:20px">Color</div>
<div class="a" style="left:621.5px;top:345.5px;width:220px;height:153px;background:linear-gradient(to bottom,rgba(0,0,0,0.000) 0%,rgba(0,0,0,0.040) 10%,rgba(0,0,0,0.105) 20%,rgba(0,0,0,0.185) 30%,rgba(0,0,0,0.277) 40%,rgba(0,0,0,0.379) 50%,rgba(0,0,0,0.489) 60%,rgba(0,0,0,0.607) 70%,rgba(0,0,0,0.732) 80%,rgba(0,0,0,0.863) 90%,rgba(0,0,0,1.000) 100%),linear-gradient(to right,rgb(255,255,255) 0.0%,rgb(255,207,207) 12.5%,rgb(255,171,171) 25.0%,rgb(255,139,139) 37.5%,rgb(255,109,109) 50.0%,rgb(255,80,80) 62.5%,rgb(255,52,52) 75.0%,rgb(255,26,26) 87.5%,rgb(255,0,0) 100.0%);overflow:hidden">
  <div class="a" style="left:-4px;top:-5px;width:14.5px;height:14.5px;border:1.9px solid #1a1a1a;border-radius:50%"></div>
</div>
<div class="a" style="left:870px;top:345.5px;width:33.5px;height:153.5px;background:linear-gradient(to bottom,#f00 0%,#f0f 16.67%,#00f 33.33%,#0ff 50%,#0f0 66.67%,#ff0 83.33%,#f00 100%)"></div>
<svg class="a" style="left:0;top:0" width="992" height="992">
<path d="M856.5 492.5L866.5 498L856.5 503.5Z" fill="#f0f0f0" stroke="#3a3a3a" stroke-width="1"/>
<g fill="none" stroke="#dcdcdc" stroke-width="1.8">
<path d="M885 272.5L881 277L885 281.5M892 272.5L888 277L892 281.5"/>
<path d="M910.5 272.5L920 282.3M920 272.5L910.5 282.3"/>
</g>
<g fill="#d2d2d2"><rect x="904" y="304.8" width="16" height="2"/><rect x="904" y="308.2" width="16" height="2"/><rect x="904" y="311.6" width="16" height="2"/><rect x="904" y="315" width="16" height="2"/></g>
<g fill="#404040"><rect x="736" y="537" width="1" height="7"/><rect x="739" y="537" width="1" height="7"/><rect x="742" y="537" width="1" height="7"/></g>
<rect x="581" y="369" width="31" height="31" rx="1.5" fill="#1f2a33"/>
<rect x="582.3" y="370.3" width="28.4" height="28.4" fill="#fbf1de"/>
<rect x="584.5" y="372.5" width="24" height="24" fill="#eba050"/>
<rect x="563" y="351.7" width="33" height="33" rx="2.5" fill="#111"/>
<rect x="564.6" y="353.3" width="29.8" height="29.8" rx="1" fill="#fff"/>
</svg>
</body></html>
